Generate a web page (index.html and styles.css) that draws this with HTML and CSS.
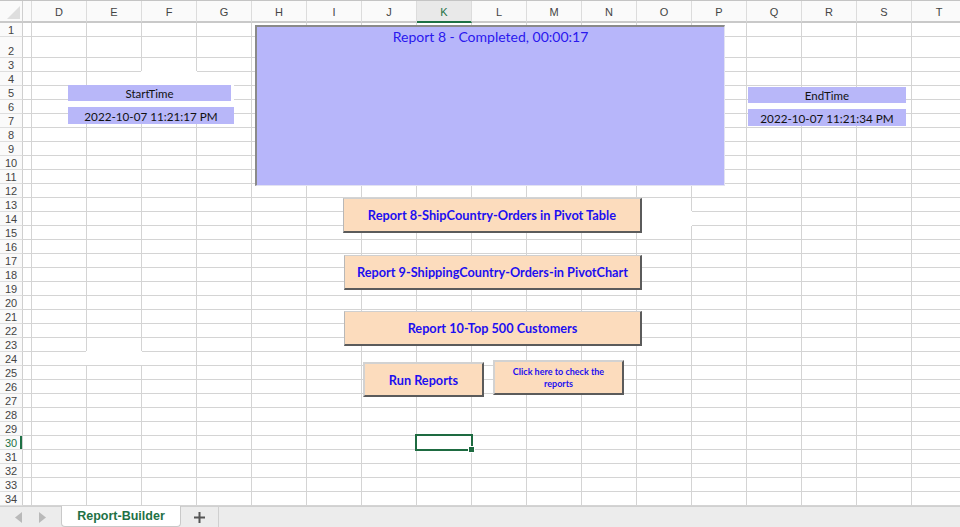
FILE: index.html
```html
<!DOCTYPE html>
<html>
<head>
<meta charset="utf-8">
<link rel="stylesheet" href="styles.css">
</head>
<body>
<div class="sheet">
  <div class="colhead">
    <div class="corner"></div>
    <div class="colc"></div>
    <div class="col">D</div><div class="col">E</div><div class="col">F</div><div class="col">G</div>
    <div class="col">H</div><div class="col">I</div><div class="col">J</div><div class="col sel">K</div>
    <div class="col">L</div><div class="col">M</div><div class="col">N</div><div class="col">O</div>
    <div class="col">P</div><div class="col">Q</div><div class="col">R</div><div class="col">S</div>
    <div class="col">T</div>
  </div>
  <div class="rows">
    <div class="row"><div class="rn">1</div><div class="cells"></div></div>
    <div class="row tall"><div class="rn">2</div><div class="cells"></div></div>
    <div class="row"><div class="rn">3</div><div class="cells"></div></div>
    <div class="row"><div class="rn">4</div><div class="cells"></div></div>
    <div class="row"><div class="rn">5</div><div class="cells"></div></div>
    <div class="row"><div class="rn">6</div><div class="cells"></div></div>
    <div class="row"><div class="rn">7</div><div class="cells"></div></div>
    <div class="row"><div class="rn">8</div><div class="cells"></div></div>
    <div class="row"><div class="rn">9</div><div class="cells"></div></div>
    <div class="row"><div class="rn">10</div><div class="cells"></div></div>
    <div class="row"><div class="rn">11</div><div class="cells"></div></div>
    <div class="row"><div class="rn">12</div><div class="cells"></div></div>
    <div class="row"><div class="rn">13</div><div class="cells"></div></div>
    <div class="row"><div class="rn">14</div><div class="cells"></div></div>
    <div class="row"><div class="rn">15</div><div class="cells"></div></div>
    <div class="row"><div class="rn">16</div><div class="cells"></div></div>
    <div class="row"><div class="rn">17</div><div class="cells"></div></div>
    <div class="row"><div class="rn">18</div><div class="cells"></div></div>
    <div class="row"><div class="rn">19</div><div class="cells"></div></div>
    <div class="row"><div class="rn">20</div><div class="cells"></div></div>
    <div class="row"><div class="rn">21</div><div class="cells"></div></div>
    <div class="row"><div class="rn">22</div><div class="cells"></div></div>
    <div class="row"><div class="rn">23</div><div class="cells"></div></div>
    <div class="row"><div class="rn">24</div><div class="cells"></div></div>
    <div class="row"><div class="rn">25</div><div class="cells"></div></div>
    <div class="row"><div class="rn">26</div><div class="cells"></div></div>
    <div class="row"><div class="rn">27</div><div class="cells"></div></div>
    <div class="row"><div class="rn">28</div><div class="cells"></div></div>
    <div class="row"><div class="rn">29</div><div class="cells"></div></div>
    <div class="row cur"><div class="rn">30</div><div class="cells"></div></div>
    <div class="row"><div class="rn">31</div><div class="cells"></div></div>
    <div class="row"><div class="rn">32</div><div class="cells"></div></div>
    <div class="row"><div class="rn">33</div><div class="cells"></div></div>
    <div class="row"><div class="rn">34</div><div class="cells"></div></div>
  </div>
  <div class="tabbar">
    <div class="navs">
      <svg width="8" height="11" viewBox="0 0 8 11"><polygon points="7,0 7,11 0,5.5" fill="#b9b9b9"/></svg>
      <svg width="8" height="11" viewBox="0 0 8 11"><polygon points="1,0 1,11 8,5.5" fill="#b9b9b9"/></svg>
    </div>
    <div class="tab">Report-Builder</div>
    <div class="addtab">
      <svg width="11" height="11" viewBox="0 0 11 11"><rect x="4.5" y="0" width="2" height="11" fill="#555"/><rect x="0" y="4.5" width="11" height="2" fill="#555"/></svg>
    </div>
  </div>

  <div class="blank b1"></div>
  <div class="blank b2"></div>
  <div class="blank b3"></div>

  <div class="statusbox">Report 8 - Completed, 00:00:17</div>

  <div class="timebox start">
    <div class="tlabel">StartTime</div>
    <div class="tvalue">2022-10-07 11:21:17 PM</div>
  </div>
  <div class="timebox end">
    <div class="tlabel">EndTime</div>
    <div class="tvalue">2022-10-07 11:21:34 PM</div>
  </div>

  <div class="btn r8">Report 8-ShipCountry-Orders in Pivot Table</div>
  <div class="btn r9">Report 9-ShippingCountry-Orders-in PivotChart</div>
  <div class="btn r10">Report 10-Top 500 Customers</div>
  <div class="btn run">Run Reports</div>
  <div class="btn check">Click here to check the<br>reports</div>

  <div class="selcell"><span class="handle"></span></div>
</div>
</body>
</html>
```

FILE: styles.css
```css
* { box-sizing: border-box; margin: 0; padding: 0; }
html, body { width: 960px; height: 527px; overflow: hidden; background: #fff; }
body { font-family: "Liberation Sans", Arial, sans-serif; }

.sheet { position: relative; width: 960px; height: 527px; display: flex; flex-direction: column; }

/* column header */
.colhead { display: flex; height: 23px; flex: none; border-top: 1px solid #c4c4c4; background: #fafafa; }
.colhead > div { border-bottom: 2px solid #c9c9c9; border-right: 1px solid #dcdcdc; flex: none; }
.corner { width: 23px; position: relative; border-right-color: #cfcfcf !important; }
.corner::after { content: ""; position: absolute; right: 2px; bottom: 2px; width: 0; height: 0;
  border-left: 13px solid transparent; border-bottom: 13px solid #dedede; }
.colc { width: 9px; }
.col { width: 55px; font-size: 11px; color: #444; display: flex; align-items: center; justify-content: center; padding-top: 1px; }
.col.sel { background: #e9e9e9; color: #1e7145; border-bottom-color: #1e7145 !important; }

/* rows */
.rows { display: flex; flex-direction: column; flex: none; }
.row { display: flex; height: 14px; flex: none; }
.row.tall { height: 21px; }
.rn { width: 23px; flex: none; border-right: 1px solid #cfcfcf; border-bottom: 1px solid #dedede;
  background: #fafafa; font-size: 11px; color: #444; display: flex; align-items: flex-end; justify-content: center; line-height: 12px; }
.row.cur .rn { color: #1e7145; box-shadow: inset -2px 0 0 #1e7145; }
.cells { flex: 1; border-bottom: 1px solid #d4d4d4;
  background: repeating-linear-gradient(to right, transparent 0 54px, #d4d4d4 54px 55px);
  background-position: -46px 0; }

/* tab bar */
.tabbar { flex: 1; display: flex; background: #ececec; border-top: 1px solid #d0d0d0; }
.navs { width: 61px; display: flex; align-items: center; gap: 15px; padding-left: 15px; }
.tab { width: 120px; margin-top: -1px; background: #fff; border: 1px solid #c9c9c9; border-top: none;
  border-radius: 0 0 4px 4px; color: #1e7145; font-weight: bold; font-size: 12.5px;
  display: flex; align-items: center; justify-content: center; padding-bottom: 1px; }
.addtab { width: 38px; border-right: 1px solid #d0d0d0; display: flex; align-items: center; justify-content: center; }

/* white fill patches hiding gridlines */
.blank { position: absolute; background: #fff; }
.b1 { left: 141px; top: 71px; width: 56px; height: 14px; }
.b2 { left: 86px; top: 351px; width: 56px; height: 14px; }
.b3 { left: 642px; top: 211px; width: 50px; height: 15px; }

/* status box */
.statusbox { position: absolute; left: 255px; top: 25px; width: 470px; height: 161px;
  background: #b7b6fa; border-top: 2px solid #8a8a8a; border-left: 2px solid #8a8a8a;
  border-right: 1px solid #e2e2f2; border-bottom: 1px solid #e2e2f2;
  font-family: Lato, "Liberation Sans", sans-serif; font-size: 14px; color: #2a18ee;
  text-align: center; padding-top: 0; line-height: 20px; }

/* time boxes */
.timebox { position: absolute; background: #fff; display: flex; flex-direction: column; gap: 6px;
  font-family: Lato, "Liberation Sans", sans-serif; color: #111; }
.timebox.start { left: 68px; top: 85px; }
.timebox.end { left: 748px; top: 87px; }
.tlabel, .tvalue { background: #b8b7f9; display: flex; align-items: center; justify-content: center; }
.tlabel { height: 16px; font-size: 11.5px; }
.tvalue { height: 17px; font-size: 11.7px; }
.start .tlabel { width: 163px; }
.start .tvalue { width: 166px; }
.end .tlabel, .end .tvalue { width: 158px; }

/* buttons */
.btn { position: absolute; height: 35px; background: #fcdcbd;
  border-top: 1px solid #cfcfcf; border-left: 1px solid #b8b8b8;
  border-right: 2px solid #5b5b5b; border-bottom: 2px solid #5b5b5b;
  font-family: Lato, "Liberation Sans", sans-serif; font-weight: bold; color: #1c0ff0;
  font-size: 12.7px; display: flex; align-items: center; justify-content: center; text-align: center; }
.r8 { left: 343px; top: 198px; width: 299px; font-size: 12.8px; }
.r9 { left: 344px; top: 255px; width: 298px; }
.r10 { left: 344px; top: 311px; width: 298px; }
.run { left: 363px; top: 362px; width: 121px; font-size: 12.7px; border-left: 2px solid #d2d2d2; border-top: 2px solid #d2d2d2; }
.check { left: 493px; top: 360px; width: 131px; font-size: 9px; line-height: 12px; border-left: 2px solid #d2d2d2; border-top: 2px solid #d2d2d2; padding-top: 1px; }

/* selected cell */
.selcell { position: absolute; left: 415px; top: 434px; width: 58px; height: 17px; border: 2px solid #1e6b41; }
.handle { position: absolute; right: -4px; bottom: -4px; width: 7px; height: 7px; background: #1e6b41; border: 1px solid #fff; }
```
